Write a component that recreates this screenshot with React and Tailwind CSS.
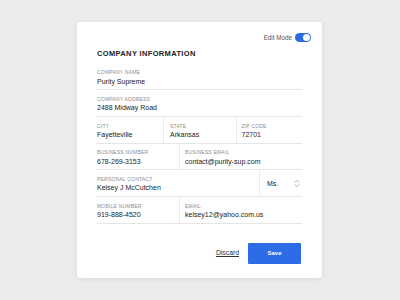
const font = { fontFamily: '"Liberation Sans", Arial, sans-serif' };

const Field = ({ label, value, className = "" }) => (
  <div className={`flex flex-col pt-[5.5px] ${className}`}>
    <span className="text-[5px] leading-[6px] tracking-[0.2px] uppercase text-[#8c8c8c]">{label}</span>
    <span className="mt-[1.5px] text-[7px] leading-[9px] text-[#222]">{value}</span>
  </div>
);

const Row = ({ children }) => (
  <div className="flex h-[26.7px] border-b border-[#e6e6e6]">{children}</div>
);

const UpDown = () => (
  <svg width="6" height="9" viewBox="0 0 6 9" fill="none" stroke="#a0a0a0" strokeWidth="0.8" strokeLinecap="round" strokeLinejoin="round">
    <path d="M1 3.4 L3 1.3 L5 3.4" />
    <path d="M1 5.6 L3 7.7 L5 5.6" />
  </svg>
);

export default function App() {
  return (
    <div className="w-[400px] h-[300px] bg-[#ececec] pt-[22px] pl-[77px]" style={font}>
      <div className="w-[245px] h-[256px] bg-white rounded-[3px] shadow-[0_1px_6px_rgba(0,0,0,0.08)] px-[20px] pt-[11px]">
        <div className="flex h-[9px] items-center justify-end gap-[3px] -mr-[9px]">
          <span className="text-[6.3px] leading-[8px] text-[#555]">Edit Mode</span>
          <div className="flex h-[9px] w-[16px] items-center justify-end rounded-full bg-[#2c6ce6] px-[1px]">
            <div className="h-[7px] w-[7px] rounded-full bg-white" />
          </div>
        </div>
        <div className="mt-[7px] h-[10px] text-[7.5px] leading-[10px] font-bold tracking-[0.35px] text-[#222]">
          COMPANY INFORMATION
        </div>
        <div className="mt-[4.7px]">
          <Row>
            <Field label="Company Name" value="Purity Supreme" />
          </Row>
          <Row>
            <Field label="Company Address" value="2488 Midway Road" />
          </Row>
          <Row>
            <Field label="City" value="Fayetteville" className="w-[66px]" />
            <Field label="State" value="Arkansas" className="w-[73px] border-l border-[#ececec] pl-[6px]" />
            <Field label="Zip Code" value="72701" className="flex-1 border-l border-[#ececec] pl-[4.5px]" />
          </Row>
          <Row>
            <Field label="Business Number" value="678-269-3153" className="w-[82px]" />
            <Field label="Business Email" value="contact@purity-sup.com" className="flex-1 border-l border-[#ececec] pl-[5px]" />
          </Row>
          <Row>
            <Field label="Personal Contact" value="Kelsey J McCutchen" className="w-[162px]" />
            <div className="flex flex-1 items-center justify-between border-l border-[#ececec] pl-[7px] pr-[2px]">
              <span className="text-[7px] leading-[9px] text-[#222]">Ms.</span>
              <UpDown />
            </div>
          </Row>
          <Row>
            <Field label="Mobile Number" value="919-888-4520" className="w-[82px]" />
            <Field label="Email" value="kelsey12@yahoo.com.us" className="flex-1 border-l border-[#ececec] pl-[5px]" />
          </Row>
        </div>
        <div className="mt-[19px] flex h-[21px] items-center justify-end gap-[9px] pr-[1px]">
          <span className="text-[6.8px] leading-[8px] text-[#333] underline">Discard</span>
          <button className="h-[21px] w-[53px] rounded-[1px] bg-[#2c6ce6] text-[6px] font-bold text-white">
            Save
          </button>
        </div>
      </div>
    </div>
  );
}
